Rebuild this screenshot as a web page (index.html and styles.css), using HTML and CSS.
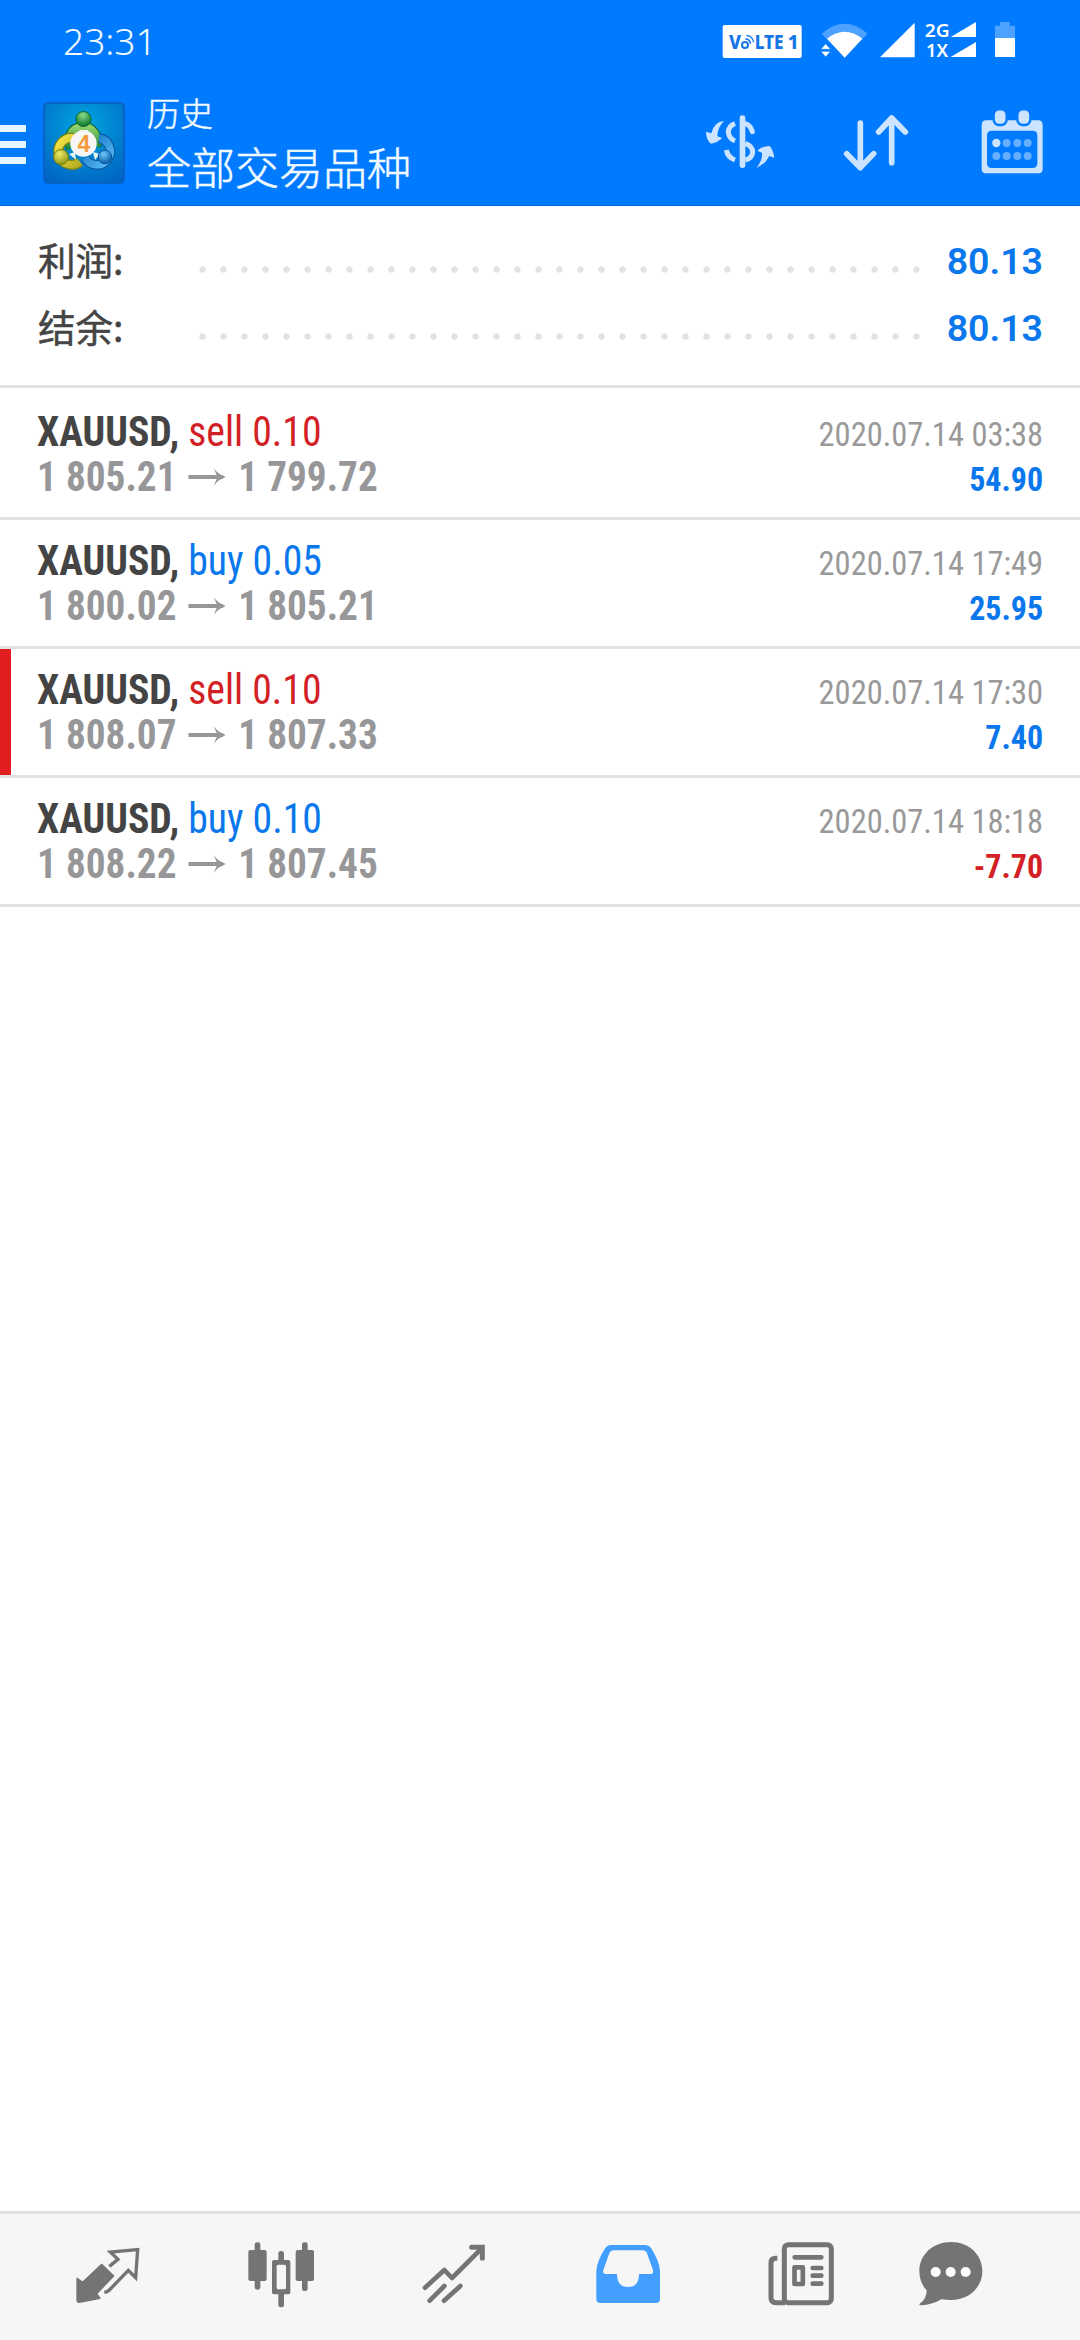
FILE: index.html
```html
<!DOCTYPE html>
<html lang="zh-CN">
<head>
<meta charset="utf-8">
<title>历史</title>
<link rel="stylesheet" href="styles.css">
</head>
<body>
<div class="screen">
  <header class="top">
    <div class="status">
      <span class="clock">23:31</span>
      <svg class="status-icons" viewBox="120 45 900 150">
        <rect x="128" y="75" width="237" height="99" rx="6" fill="#fff"/>
        <g class="volte"><text x="147" y="147" textLength="36" lengthAdjust="spacingAndGlyphs">V</text><text x="224" y="147" textLength="87" lengthAdjust="spacingAndGlyphs">LTE</text><text x="323" y="147">1</text></g>
        <g fill="none" stroke="#1676e8" stroke-width="6"><circle cx="195" cy="135" r="9"/><path d="M196 117q13 0 16 14" stroke-width="5"/><path d="M199 106q19 2 22 21" stroke-width="4"/></g>
        <path d="M425 101Q494 42 563 101L494 172Z" fill="#4da1ff"/>
        <path d="M441 116Q494 74 547 116L494 173Z" fill="#fff"/>
        <path d="M422 148l15-17 15 17zM422 154h30l-15 17z" fill="#fff" stroke="#007aff" stroke-width="2"/>
        <path d="M600 172L704 68V172Z" fill="#fff"/>
        <g class="net"><text x="734" y="111" textLength="75" lengthAdjust="spacingAndGlyphs">2G</text><text x="738" y="171" textLength="66" lengthAdjust="spacingAndGlyphs">1X</text></g>
        <path d="M812 111L888 66V111ZM812 171L888 126V171Z" fill="#fff"/>
        <path d="M945 77h15V66h29v11h16v38h-60z" fill="#4da1ff"/>
        <path d="M945 114h60v57h-60z" fill="#fff"/>
      </svg>
    </div>
    <div class="bar">
      <div class="burger"><i></i><i></i><i></i></div>
      <svg class="logo" viewBox="0 0 82 82">
        <defs>
          <radialGradient id="bg" cx=".5" cy=".3" r=".8"><stop offset="0" stop-color="#00a6e0"/><stop offset="1" stop-color="#0063c2"/></radialGradient>
          <linearGradient id="gr" x2="0" y2="1"><stop offset="0" stop-color="#8fd06a"/><stop offset="1" stop-color="#1d8a36"/></linearGradient>
          <linearGradient id="ye" x2="1" y2="1"><stop offset="0" stop-color="#f3e545"/><stop offset="1" stop-color="#b5ac22"/></linearGradient>
          <linearGradient id="bl" x2="1" y2="1"><stop offset="0" stop-color="#1272c4"/><stop offset="1" stop-color="#59bdf5"/></linearGradient>
          <radialGradient id="gb" cx=".45" cy=".25" r=".7"><stop offset="0" stop-color="#8cdc8a"/><stop offset="1" stop-color="#0e7a30"/></radialGradient>
          <radialGradient id="yb" cx=".4" cy=".3" r=".7"><stop offset="0" stop-color="#f2ea6a"/><stop offset="1" stop-color="#8f9a14"/></radialGradient>
          <radialGradient id="bb" cx=".4" cy=".3" r=".7"><stop offset="0" stop-color="#6cc9fa"/><stop offset="1" stop-color="#0b5cab"/></radialGradient>
        </defs>
        <rect x="1" y="1" width="80" height="80" rx="4" fill="url(#bg)" stroke="#0862c8" stroke-width="2"/>
        <g fill="none">
          <path d="M28 46A14 14 0 1 1 53 44" stroke="#126b35" stroke-width="10"/>
          <path d="M28 46A14 14 0 1 1 53 44" stroke="url(#gr)" stroke-width="7.500"/>
          <path d="M31 36A13.500 13.500 0 1 0 37 60" stroke="#7d8517" stroke-width="10"/>
          <path d="M31 36A13.500 13.500 0 1 0 37 60" stroke="url(#ye)" stroke-width="7.500"/>
          <path d="M56 36A13.500 13.500 0 1 1 42 56" stroke="#0b5ba6" stroke-width="10"/>
          <path d="M56 36A13.500 13.500 0 1 1 42 56" stroke="url(#bl)" stroke-width="7.500"/>
        </g>
        <path d="M26 52l6-2 1 8zM50 50l7 2-5 6zM36 28l5 4 5-4z" fill="#e4f2f0"/>
        <circle cx="40.500" cy="17" r="7.500" fill="url(#gb)" stroke="#11682f"/>
        <circle cx="18" cy="55" r="7.500" fill="url(#yb)" stroke="#77800f"/>
        <circle cx="62" cy="55" r="6.800" fill="url(#bb)" stroke="#0a559c"/>
        <circle cx="40.500" cy="41.500" r="13.200" fill="#f8f6f5"/>
        <text class="logo-four" x="34.500" y="49.500">4</text>
      </svg>
      <div class="titles"><div class="title-small">历史</div><div class="title-main">全部交易品种</div></div>
      <div class="actions">
        <svg viewBox="75 320 210 210">
          <g fill="#cce4ff"><path d="M132 362Q102 364 94 399L78 394Q79 420 93 430Q110 428 127 413L112 408Q112 382 132 362Z"/><path d="M229 503Q260 488 267 467L283 472Q279 448 269 437Q245 438 232 451L246 457Q248 480 229 503Z"/><rect x="179" y="345" width="17" height="158" rx="8"/></g>
          <g fill="none" stroke="#cce4ff" stroke-width="15"><path d="M165 370Q145 377 145 396Q147 415 165 422M139 449Q143 471 165 479"/><path d="M195 370Q211 372 217 394" stroke-linecap="round"/><path d="M196 429Q218 437 218 456Q216 475 196 479"/></g>
        </svg>
        <svg viewBox="483 320 210 210"><path d="M541 368V500M500 460L541 502L581 460M635 487V354M596 395L635 353L676 395" fill="none" stroke="#cce4ff" stroke-width="17" stroke-linecap="round" stroke-linejoin="round"/></svg>
        <svg viewBox="892 320 210 210">
          <path fill-rule="evenodd" fill="#cce4ff" d="M920 360H1075Q1089 360 1089 374V505Q1089 519 1075 519H920Q906 519 906 505V374Q906 360 920 360ZM936 391Q922 391 922 405V489Q922 503 936 503H1059Q1073 503 1073 489V405Q1073 391 1059 391Z"/>
          <g fill="#cce4ff" stroke="#007aff" stroke-width="7"><rect x="942" y="327" width="39" height="47" rx="16"/><rect x="1013" y="327" width="39" height="47" rx="16"/></g>
          <g fill="#66afff"><circle cx="950" cy="428" r="12.500" fill="#cce4ff"/><circle cx="981" cy="428" r="12"/><circle cx="1013" cy="428" r="12"/><circle cx="1044" cy="428" r="12"/><circle cx="950" cy="467" r="12"/><circle cx="981" cy="467" r="12"/><circle cx="1013" cy="467" r="12"/><circle cx="1044" cy="467" r="12"/></g>
        </svg>
      </div>
    </div>
  </header>

  <section class="summary">
    <div class="sum-row"><span class="label">利润:</span><span class="dots"></span><span class="total">80.13</span></div>
    <div class="sum-row"><span class="label">结余:</span><span class="dots"></span><span class="total">80.13</span></div>
  </section>

  <main class="deals">
    <article class="deal">
      <div class="left"><div class="name"><b>XAUUSD,</b> <span class="sell">sell 0.10</span></div><div class="price"><span>1 805.21</span><svg class="arrow" viewBox="0 0 40 18"><path d="M0 9H37"/><path class="head" d="M27 0Q31 6 40 9Q31 12 27 18L31 9Z"/></svg><span>1 799.72</span></div></div>
      <div class="right"><div class="time">2020.07.14 03:38</div><div class="amount up">54.90</div></div>
    </article>
    <article class="deal">
      <div class="left"><div class="name"><b>XAUUSD,</b> <span class="buy">buy 0.05</span></div><div class="price"><span>1 800.02</span><svg class="arrow" viewBox="0 0 40 18"><path d="M0 9H37"/><path class="head" d="M27 0Q31 6 40 9Q31 12 27 18L31 9Z"/></svg><span>1 805.21</span></div></div>
      <div class="right"><div class="time">2020.07.14 17:49</div><div class="amount up">25.95</div></div>
    </article>
    <article class="deal marked">
      <div class="left"><div class="name"><b>XAUUSD,</b> <span class="sell">sell 0.10</span></div><div class="price"><span>1 808.07</span><svg class="arrow" viewBox="0 0 40 18"><path d="M0 9H37"/><path class="head" d="M27 0Q31 6 40 9Q31 12 27 18L31 9Z"/></svg><span>1 807.33</span></div></div>
      <div class="right"><div class="time">2020.07.14 17:30</div><div class="amount up">7.40</div></div>
    </article>
    <article class="deal">
      <div class="left"><div class="name"><b>XAUUSD,</b> <span class="buy">buy 0.10</span></div><div class="price"><span>1 808.22</span><svg class="arrow" viewBox="0 0 40 18"><path d="M0 9H37"/><path class="head" d="M27 0Q31 6 40 9Q31 12 27 18L31 9Z"/></svg><span>1 807.45</span></div></div>
      <div class="right"><div class="time">2020.07.14 18:18</div><div class="amount down">-7.70</div></div>
    </article>
  </main>

  <nav class="tabs">
    <a class="tab"><svg viewBox="128 120 210 210"><path fill="#747474" stroke="#747474" stroke-width="4" stroke-linejoin="round" d="M214 193L250 228L199 281L209 295L147 307Q140 307 140 300V235L157 247Z"/><path fill="none" stroke="#747474" stroke-width="10" d="M237 199L263 178L240 156L322 149L316 233L294 211L237 270Q231 276 222 277"/></svg></a>
    <a class="tab"><svg viewBox="645 120 210 210"><g fill="#747474"><rect x="652" y="150" width="55" height="93" rx="6"/><rect x="671" y="127" width="17" height="142" rx="7"/><rect x="794" y="150" width="55" height="93" rx="6"/><rect x="813" y="127" width="17" height="146" rx="7"/><rect x="742" y="153" width="17" height="169" rx="7"/><rect x="723" y="180" width="55" height="103" rx="6"/></g><rect x="737" y="194" width="28" height="74" rx="5" fill="#f6f6f6"/></svg></a>
    <a class="tab"><svg viewBox="1165 120 210 210"><g fill="none" stroke="#747474" stroke-width="14" stroke-linecap="round"><path d="M1183 263L1241 210L1264 234L1353 145" stroke-linejoin="round"/><path d="M1323 142H1355V175" stroke-width="15"/><path d="M1197 302L1241 258M1240 302L1289 258"/></g></svg></a>
    <a class="tab"><svg viewBox="96 120 210 210"><path fill="#429eff" fill-rule="evenodd" d="M149 135H254Q264 135 270 144Q296 184 297 214V297Q297 309 285 309H118Q106 309 106 297V214Q107 184 133 144Q139 135 149 135ZM158 151Q149 151 145 160L127 210Q124 222 135 222H168Q168 261 201 261Q234 261 234 222H267Q278 222 276 210L258 160Q254 151 245 151Z"/></svg></a>
    <a class="tab"><svg viewBox="619 120 210 210"><g fill="none" stroke="#747474" stroke-width="15"><rect x="674" y="134" width="141" height="174" rx="12"/><path d="M653 175H648Q634 175 634 189V294Q634 308 650 308H676"/></g><g fill="none" stroke="#747474" stroke-width="14" stroke-linecap="round"><path d="M705 172H785M759 204H785M759 227H785M759 251H785"/><rect x="704.500" y="202" width="25" height="50" stroke-linejoin="round"/></g></svg></a>
    <a class="tab last"><svg viewBox="1069 120 210 210"><path fill="#747474" d="M1174 126C1228 126 1268 164 1268 213S1228 300 1174 300Q1158 300 1145 298Q1117 315 1085 316Q1075 316 1082 310Q1101 296 1101 271Q1079 248 1079 213C1079 164 1120 126 1174 126Z"/><g fill="#fff"><circle cx="1128" cy="216" r="15"/><circle cx="1173" cy="216" r="15"/><circle cx="1218" cy="216" r="15"/></g></svg></a>
  </nav>
</div>
</body>
</html>
```
FILE: styles.css
```css
* { box-sizing: border-box; }
body { margin: 0; background: #fff; }
svg { display: block; flex: none; }

.screen {
  width: 1080px;
  height: 2340px;
  display: flex;
  flex-direction: column;
  overflow: hidden;
  font-family: "Roboto Condensed", Roboto, "Noto Sans CJK SC", sans-serif;
  font-stretch: 75%;
}

.top {
  height: 206px;
  background: #007aff;
  border-bottom: 1px solid #0069d9;
  color: #f0faff;
}
.status {
  height: 82px;
  padding: 0 60px 0 63px;
  display: flex;
  justify-content: space-between;
}
.clock {
  font: 350 37px/82px "Noto Sans", sans-serif;
}
.status-icons {
  width: 300px;
  height: 50px;
  margin-top: 15px;
}
.volte { font: 800 56px "Noto Sans", sans-serif; fill: #1676e8; }
.net { font: 600 51px "Noto Sans", sans-serif; fill: #fff; }

.bar {
  height: 123px;
  display: flex;
  align-items: flex-start;
}
.burger {
  width: 26px;
  padding-top: 43px;
  display: grid;
  gap: 9px;
}
.burger i { height: 7px; background: #e6f6ff; }
.logo { width: 82px; height: 82px; margin: 20px 22px 0 17px; }
.logo-four { font: 700 23px "Liberation Sans", sans-serif; fill: #f59a3c; }
.titles {
  padding-top: 6px;
  font-family: "Noto Sans CJK SC", sans-serif;
  font-stretch: normal;
  font-weight: 300;
  -webkit-text-stroke: .5px #f0faff;
}
.title-small { font-size: 33px; line-height: 48px; }
.title-main { font-size: 44px; line-height: 60px; }
.actions {
  margin-left: auto;
  padding: 24.700px 32.700px 0 0;
  display: flex;
  gap: 66px;
}
.actions svg { width: 70px; height: 70px; }

.summary {
  height: 182px;
  padding: 22px 37px 0;
  border-bottom: 3px solid #e3e3e3;
}
.sum-row {
  height: 67px;
  display: flex;
  align-items: flex-start;
}
.label {
  width: 155px;
  padding-left: 1px;
  font: 400 37.500px/62px "Noto Sans CJK SC", sans-serif;
  color: #444;
  -webkit-text-stroke: .5px #444;
}
.dots {
  width: 735px;
  height: 21px;
  margin-top: 31px;
  background: radial-gradient(circle, #e2e2e2 2.800px, transparent 3.600px) 0 0 / 21px 21px;
}
.total {
  margin-left: auto;
  font: 600 37.500px/67px Roboto, sans-serif;
  font-stretch: 100%;
  color: #0a78ec;
}

.deals { flex: 1; padding-top: 3px; }
.deal {
  height: 129px;
  padding: 15px 37px 0;
  border-bottom: 3px solid #e3e3e3;
  display: flex;
  justify-content: space-between;
  line-height: 45px;
}
.marked { background: linear-gradient(#e31e20, #e31e20) 0 0 / 11px 100% no-repeat; }
.left { padding-top: 3px; font-size: 42px; }
.right { padding-top: 6px; font-size: 34px; text-align: right; }
.name { transform: scaleX(.945); transform-origin: left; }
.name b { color: #444; font-weight: 700; }
.sell { color: #d31f26; }
.buy { color: #0a78ec; }
.price {
  display: flex;
  align-items: center;
  gap: 12px;
  font-weight: 700;
  color: #97979a;
  transform: scaleX(.935);
  transform-origin: left;
}
.arrow {
  width: 42px;
  height: 18px;
  fill: none;
  stroke: #97979a;
  stroke-width: 4;
}
.arrow .head { fill: #97979a; stroke: none; }
.time { color: #999; transform: scaleX(.955); transform-origin: right; }
.amount { font-weight: 700; transform: scaleX(.94); transform-origin: right; }
.up { color: #0a78ec; }
.down { color: #d31f26; }

.tabs {
  height: 129px;
  padding-left: 21px;
  display: flex;
  background: #f6f6f6;
  border-top: 3px solid #e1e1e1;
}
.tab {
  width: 173.300px;
  padding-top: 26px;
  display: flex;
  justify-content: center;
}
.tab svg { width: 70px; height: 70px; }
.last { width: 127px; }
```
